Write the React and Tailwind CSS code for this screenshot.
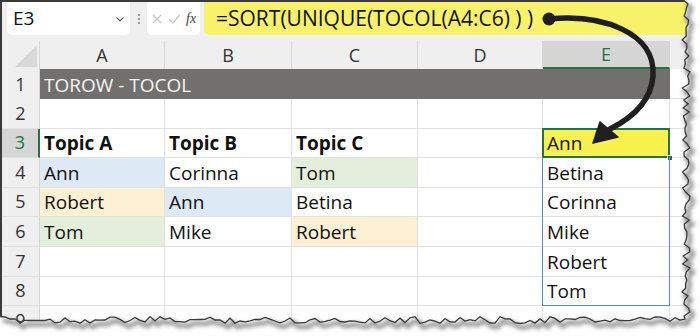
import React from 'react';

const COLS = [
    { key: 'A', w: 'w-[125px]' },
    { key: 'B', w: 'w-[127px]' },
    { key: 'C', w: 'w-[126px]' },
    { key: 'D', w: 'w-[125px]' },
    { key: 'E', w: 'w-[127px]' },
];

const BG = {
    blue: 'bg-[#dde9f5]',
    orange: 'bg-[#fdf0d3]',
    green: 'bg-[#e3efdb]',
};

// cell: [text, colour, bold]
const ROWS = [
    { n: 2, cells: {} },
    { n: 3, cells: { A: ['Topic A', null, true], B: ['Topic B', null, true], C: ['Topic C', null, true], E: ['Ann'] } },
    { n: 4, cells: { A: ['Ann', 'blue'], B: ['Corinna'], C: ['Tom', 'green'], E: ['Betina'] } },
    { n: 5, cells: { A: ['Robert', 'orange'], B: ['Ann', 'blue'], C: ['Betina'], E: ['Corinna'] } },
    { n: 6, cells: { A: ['Tom', 'green'], B: ['Mike'], C: ['Robert', 'orange'], E: ['Mike'] } },
    { n: 7, cells: { E: ['Robert'] } },
    { n: 8, cells: { E: ['Tom'] } },
    { n: 9, cells: {} },
];

// deterministic jitter for the torn paper edge
const jit = (i, s) => {
    const v = Math.sin(i * 12.9898 + s * 78.233) * 43758.5453;
    return v - Math.floor(v);
};

const rightEdge = [];
for (let y = 0, i = 0; y <= 318; y += 4, i++) rightEdge.push([686 + (jit(i, 1) - 0.5) * 8, y]);
const bottomEdge = [];
for (let x = 0, i = 0; x <= 686; x += 5, i++) bottomEdge.push([x, 320 + (jit(i, 2) - 0.5) * 7]);

const edgeLine = [...bottomEdge, ...rightEdge.slice().reverse()];
const edgePath = edgeLine.map((p, i) => `${i ? 'L' : 'M'}${p[0].toFixed(1)},${p[1].toFixed(1)}`).join(' ');
const outsidePath = `M0,336 ${edgeLine.map(p => `L${p[0].toFixed(1)},${p[1].toFixed(1)}`).join(' ')} L700,0 L700,336 Z`;

const Cell = ({ row, col }) => {
    const c = row.cells[col.key];
    const isE = col.key === 'E';
    const spill = isE && row.n >= 3 && row.n <= 8;
    let cls = `${col.w} h-full shrink-0 relative flex items-end pl-[4px] pb-[2px] text-[19px] leading-[24px] text-[#111] border-r border-b border-[#e1e1e1]`;
    if (c && c[1]) cls += ` ${BG[c[1]]}`;
    if (c && c[2]) cls += ' font-bold';
    if (isE && row.n === 3) cls += ' bg-[#f8f14e]';
    return (
        <div className={cls}>
            {spill && (
                <div className={`absolute -left-px -top-px right-[-1px] bottom-[-1px] pointer-events-none border-l border-r border-[#5b87c9] ${row.n === 8 ? 'border-b' : ''}`}></div>
            )}
            {isE && row.n === 3 && (
                <>
                    <div className="absolute -left-px -top-px right-[-1px] bottom-[-1px] border-2 border-[#217346] pointer-events-none"></div>
                    <div className="absolute right-[-4px] bottom-[-4px] w-[6px] h-[6px] bg-[#217346] border border-white"></div>
                </>
            )}
            <span className="relative">{c ? c[0] : ''}</span>
        </div>
    );
};

const App = () => {
    return (
        <div className="w-[700px] h-[336px] bg-white relative overflow-hidden font-['Open_Sans',sans-serif]">
            <div className="w-[700px] h-[336px] bg-[#efefef] border-t-2 border-l-2 border-[#3b3b3b]">
                {/* formula bar */}
                <div className="h-[33px] flex items-stretch">
                    <div className="ml-[5px] w-[123px] bg-white rounded-b-[5px] flex items-center justify-between pl-[6px] pr-[5px]">
                        <span className="text-[19px] text-[#111]">E3</span>
                        <svg width="10" height="8" viewBox="0 0 10 8"><path d="M1.5 2.5 L5 6 L8.5 2.5" fill="none" stroke="#666" strokeWidth="1.2" /></svg>
                    </div>
                    <div className="w-[17px] flex flex-col items-center justify-center gap-[2px]">
                        <span className="w-[2px] h-[2px] bg-[#999]"></span>
                        <span className="w-[2px] h-[2px] bg-[#999]"></span>
                        <span className="w-[2px] h-[2px] bg-[#999]"></span>
                    </div>
                    <div className="w-[53px] bg-white rounded-b-[5px] flex items-center gap-[5px] pl-[4px]">
                        <svg width="12" height="12" viewBox="0 0 12 12"><path d="M2 2 L10 10 M10 2 L2 10" stroke="#c4c4c4" strokeWidth="1.2" /></svg>
                        <svg width="13" height="12" viewBox="0 0 13 12"><path d="M1.5 6.5 L5 10 L11.5 2" fill="none" stroke="#c4c4c4" strokeWidth="1.2" /></svg>
                        <span className="font-['Liberation_Serif',serif] italic text-[14px] text-[#444] leading-none">fx</span>
                    </div>
                    <div className="ml-[4px] flex-1 bg-[#f8f26a] rounded-bl-[5px] flex items-center pl-[12px]">
                        <span className="text-[21px] text-[#111] whitespace-pre">=SORT(UNIQUE(TOCOL(A4:C6) ) )</span>
                    </div>
                </div>

                {/* column headers */}
                <div className="mt-[6px] h-[28px] flex">
                    <div className="w-[38px] h-full shrink-0 flex items-end justify-end pr-[2px] pb-[2px] border-r border-[#d6d6d6]">
                        <svg width="22" height="22" viewBox="0 0 22 22"><path d="M22 0 L22 22 L0 22 Z" fill="#d9d9d9" /></svg>
                    </div>
                    {COLS.map(col => (
                        <div key={col.key} className={`${col.w} h-full shrink-0 flex items-center justify-center text-[18px] border-r border-[#d6d6d6] ${col.key === 'E' ? 'bg-[#d6d6d6] text-[#217346] border-b-2 border-b-[#217346]' : 'text-[#333]'}`}>
                            {col.key}
                        </div>
                    ))}
                    <div className="flex-1"></div>
                </div>

                {/* row 1 */}
                <div className="h-[30px] flex bg-white">
                    <div className="w-[38px] h-full shrink-0 bg-[#efefef] flex items-end justify-center pb-[1px] text-[18px] text-[#333] border-r border-[#d6d6d6]">1</div>
                    <div className="w-[630px] h-full shrink-0 bg-[#72706e] flex items-end pl-[4px] pb-[2px] text-[19px] leading-[24px] text-[#f4f4f4]">TOROW - TOCOL</div>
                    <div className="flex-1 border-b border-[#e1e1e1]"></div>
                </div>

                {ROWS.map(row => (
                    <div key={row.n} className="h-[29.6px] flex bg-white">
                        <div className={`w-[38px] h-full shrink-0 flex items-end justify-center pb-[1px] text-[18px] border-b border-[#e1e1e1] ${row.n === 3 ? 'bg-[#d6d6d6] text-[#217346] border-r-2 border-r-[#217346]' : 'bg-[#efefef] text-[#333] border-r border-r-[#d6d6d6]'}`}>
                            {row.n}
                        </div>
                        {COLS.map(col => (
                            <Cell key={col.key} row={row} col={col} />
                        ))}
                        <div className="flex-1 border-b border-[#e1e1e1]"></div>
                    </div>
                ))}
            </div>

            {/* torn edge + arrow overlay */}
            <svg className="absolute left-0 top-0 pointer-events-none" width="700" height="336" viewBox="0 0 700 336">
                <defs>
                    <filter id="blur" x="-5%" y="-5%" width="110%" height="110%">
                        <feGaussianBlur stdDeviation="2" />
                    </filter>
                </defs>
                <path d={outsidePath} fill="#ffffff" />
                <path d={edgePath} transform="translate(3,4)" fill="none" stroke="#8a8a8a" strokeWidth="4" filter="url(#blur)" />
                <path d={edgePath} fill="none" stroke="#3a3a3a" strokeWidth="1.3" />

                <circle cx="549" cy="19" r="6.5" fill="#1f1f1f" />
                <path d="M549 19 C602 14 656 32 653 76 C651 102 632 118 610 129" fill="none" stroke="#1f1f1f" strokeWidth="5.5" strokeLinecap="round" />
                <path d="M593 143 L600 122 L618 137 Z" fill="#1f1f1f" stroke="#1f1f1f" strokeWidth="1.5" strokeLinejoin="round" />
            </svg>
        </div>
    );
};

export default App;
